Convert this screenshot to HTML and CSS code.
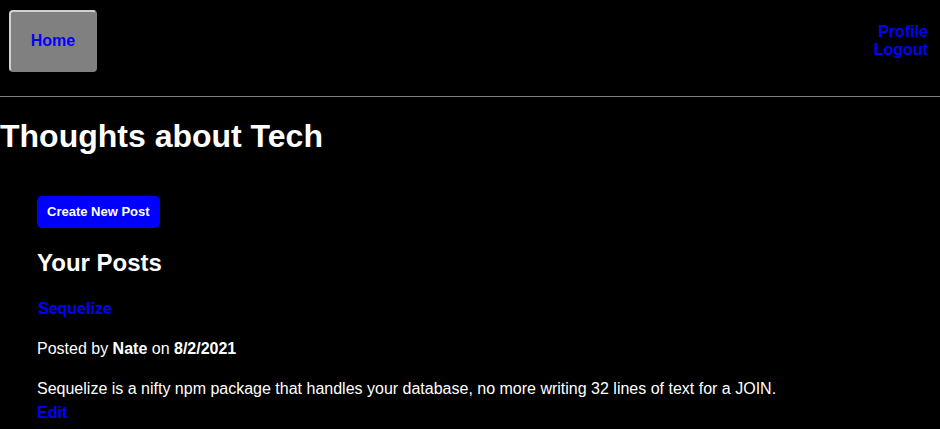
FILE: index.html
```html
<!DOCTYPE html>
<html>
<head>
<meta charset="utf-8">
<link rel="stylesheet" href="styles.css">
</head>
<body>
<header class="topbar">
  <a class="home-btn" href="#">Home</a>
  <nav class="user-nav">
    <a href="#">Profile</a>
    <a href="#">Logout</a>
  </nav>
</header>
<h1 class="page-title">Thoughts about Tech</h1>
<main class="dashboard">
  <a class="new-post" href="#">Create New Post</a>
  <h2 class="section-title">Your Posts</h2>
  <article class="post">
    <p class="post-title"><a href="#">Sequelize</a></p>
    <p class="post-meta">Posted by <b>Nate</b> on <b>8/2/2021</b></p>
    <p class="post-body">Sequelize is a nifty npm package that handles your database, no more writing 32 lines of text for a JOIN.</p>
    <a class="post-edit" href="#">Edit</a>
  </article>
</main>
</body>
</html>
```
FILE: styles.css
```css
html, body {
  margin: 0;
  background: #000;
  color: #fff;
  font-family: "Liberation Sans", Arial, sans-serif;
}
a {
  color: #0000ff;
  font-weight: bold;
  text-decoration: none;
}
.topbar {
  height: 97px;
  box-sizing: border-box;
  border-bottom: 1px solid #808080;
  display: flex;
  justify-content: space-between;
  align-items: flex-start;
  padding: 10px 12px 0 9px;
}
.home-btn {
  width: 88px;
  height: 62px;
  box-sizing: border-box;
  background: #808080;
  border: 2px solid #808080;
  border-top-color: #d0d0d0;
  border-left-color: #d0d0d0;
  border-radius: 4px;
  display: flex;
  align-items: center;
  justify-content: center;
  font-size: 16px;
}
.user-nav {
  display: flex;
  flex-direction: column;
  align-items: flex-end;
  margin-top: 13px;
  font-size: 16px;
  line-height: 18px;
}
.page-title {
  font-size: 32px;
  margin: 21px 0 0;
  line-height: 37px;
}
.dashboard {
  padding: 41px 37px 0;
}
.new-post {
  display: inline-block;
  background: #0000ff;
  color: #fff;
  font-size: 13px;
  line-height: 32px;
  padding: 0 10px;
  border-radius: 5px;
}
.section-title {
  font-size: 24px;
  line-height: 28px;
  margin: 21px 0 0;
}
.post {
  font-size: 16px;
  line-height: 24px;
}
.post p {
  margin: 16px 0 0;
}
.post-title {
  margin-top: 20px !important;
  padding-left: 1px;
}
.post-edit {
  display: block;
  font-size: 16px;
}
```
